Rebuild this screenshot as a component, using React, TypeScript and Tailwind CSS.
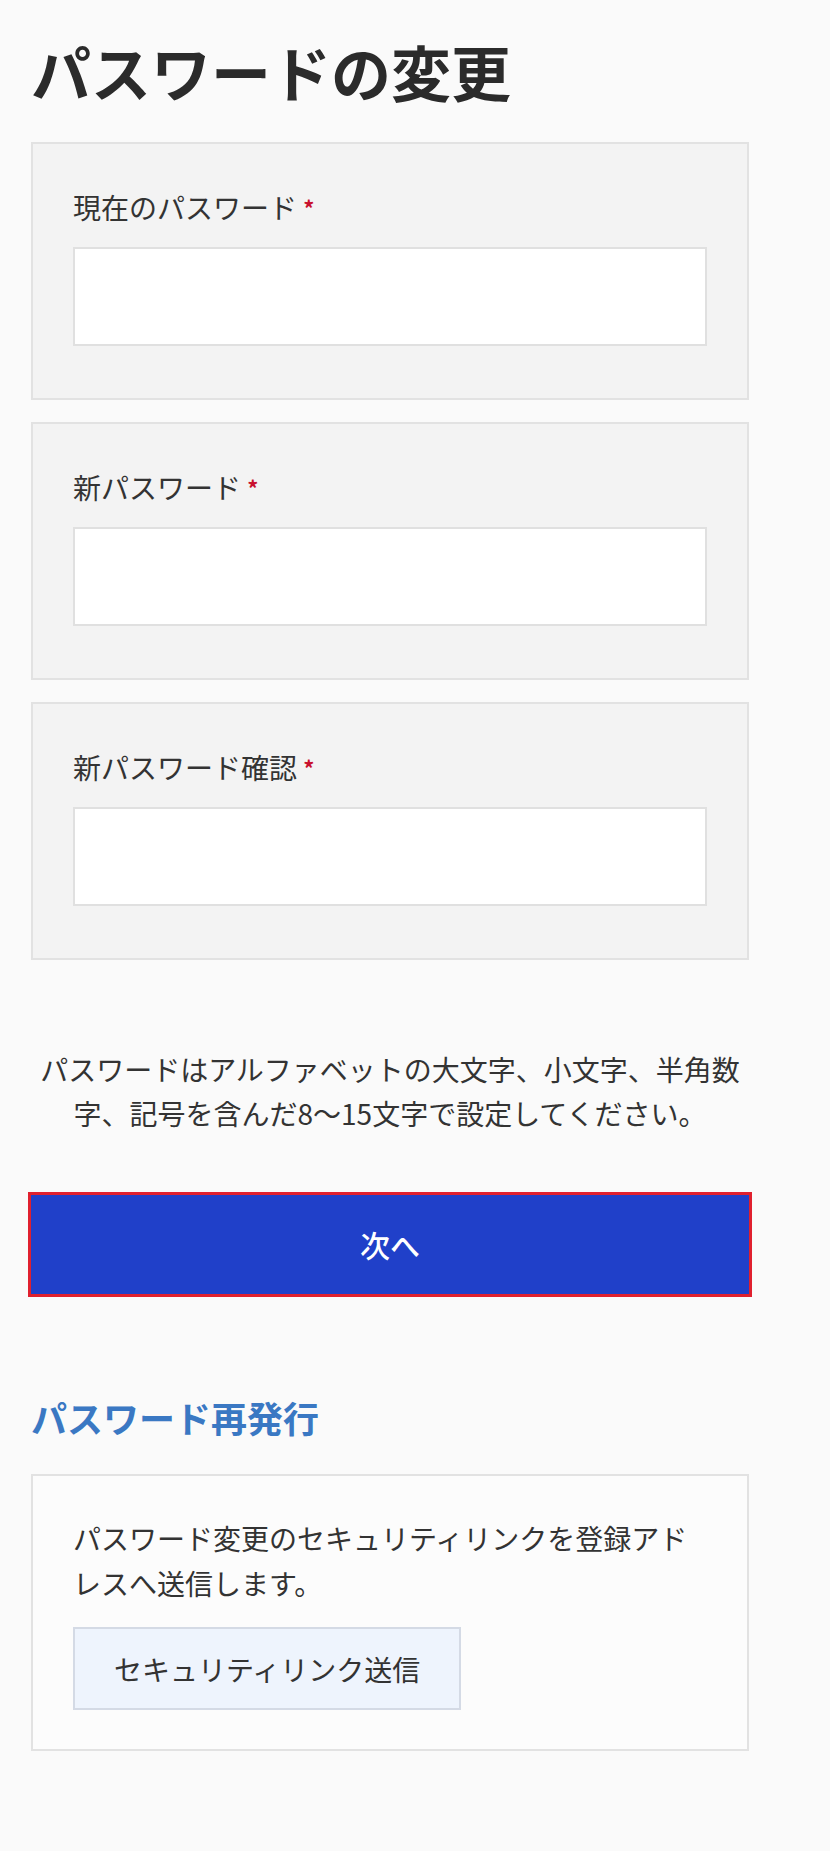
import { useState } from "react";

interface FieldBoxProps {
  id: string;
  label: string;
  value: string;
  onChange: (v: string) => void;
}

function FieldBox({ id, label, value, onChange }: FieldBoxProps) {
  return (
    <div className="border-2 border-[#e2e2e2] bg-[#f3f3f3] px-[40px] pt-[44px] pb-[52px]">
      <label htmlFor={id} className="block text-[28px] leading-[39px] text-[#333]">
        {label} <span className="text-[22px] font-bold text-[#c8102e] align-top">*</span>
      </label>
      <input
        type="password"
        id={id}
        value={value}
        onChange={(e) => onChange(e.target.value)}
        className="mt-[20px] block h-[99px] w-full border-2 border-[#e0e0e0] bg-white px-3 text-[28px] outline-none"
      />
    </div>
  );
}

export default function App() {
  const [current, setCurrent] = useState("");
  const [next, setNext] = useState("");
  const [confirm, setConfirm] = useState("");

  return (
    <div className="min-h-[1851px] bg-[#fafafa] font-['Noto_Sans_CJK_JP',sans-serif] text-[#333]">
      <div className="ml-[31px] w-[718px] pt-[26px] pb-[100px]">
        <h1 className="text-[60px] leading-[90px] font-bold text-[#2b2b2b]">パスワードの変更</h1>

        <form onSubmit={(e) => e.preventDefault()}>
          <div className="mt-[26px] flex flex-col gap-[22px]">
            <FieldBox id="currentPassword" label="現在のパスワード" value={current} onChange={setCurrent} />
            <FieldBox id="newPassword" label="新パスワード" value={next} onChange={setNext} />
            <FieldBox id="confirmPassword" label="新パスワード確認" value={confirm} onChange={setConfirm} />
          </div>

          <p className="mt-[87px] text-center text-[28px] leading-[44px] text-[#333]">
            パスワードはアルファベットの大文字、小文字、半角数字、記号を含んだ8〜15文字で設定してください。
          </p>

          <button
            type="submit"
            className="mt-[60px] block h-[99px] w-full bg-[#2040c9] text-[30px] font-medium text-white ring-3 ring-[#e0202e]"
          >
            次へ
          </button>
        </form>

        <h2 className="mt-[97px] text-[36px] leading-[52px] font-bold text-[#3a78c3]">パスワード再発行</h2>

        <div className="mt-[31px] border-2 border-[#e2e2e2] bg-[#fcfcfc] px-[40px] pt-[40px] pb-[39px]">
          <p className="text-[28px] leading-[45px] text-[#333]">
            パスワード変更のセキュリティリンクを登録アドレスへ送信します。
          </p>
          <button
            type="button"
            className="mt-[21px] h-[83px] border-2 border-[#d4dae5] bg-[#eef4fd] px-[39px] text-[28px] text-[#333]"
          >
            セキュリティリンク送信
          </button>
        </div>
      </div>
    </div>
  );
}
